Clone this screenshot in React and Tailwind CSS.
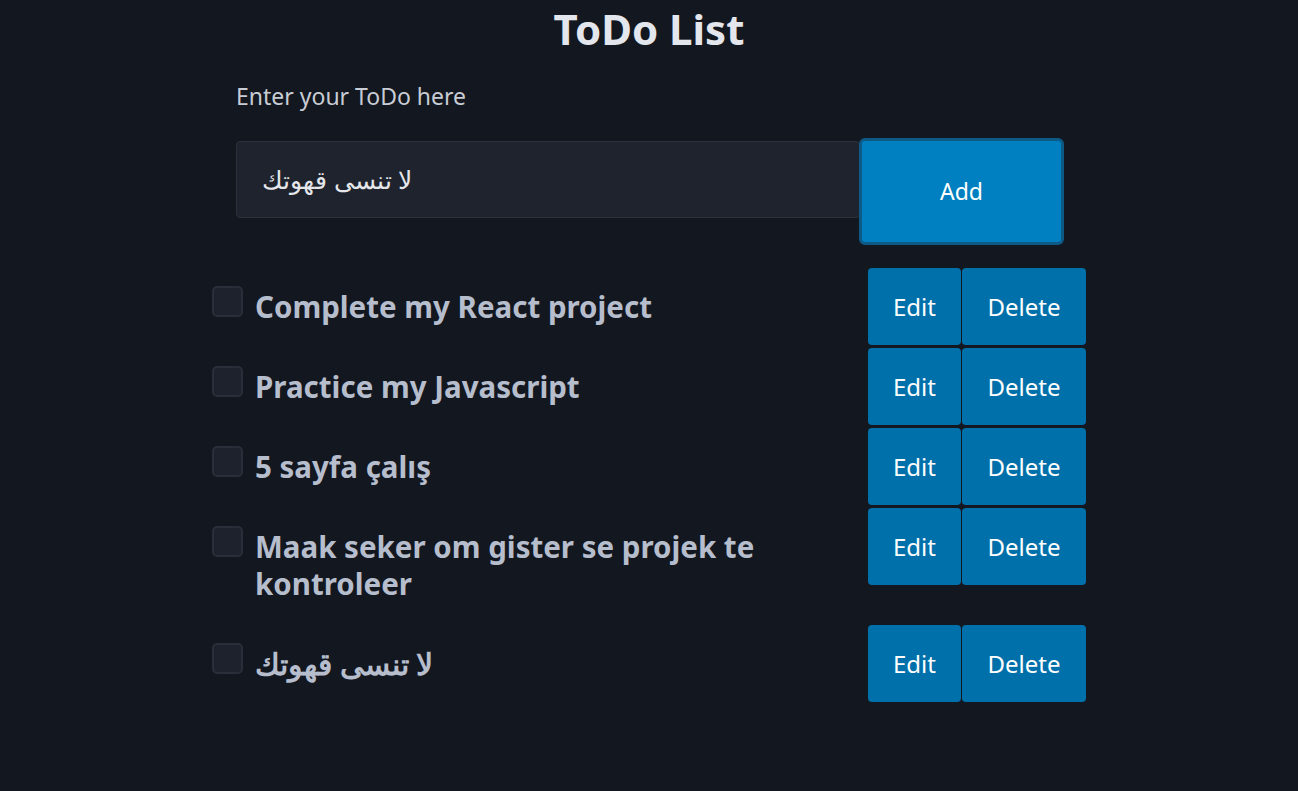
import React from "react";

const todos = [
  "Complete my React project",
  "Practice my Javascript",
  "5 sayfa çalış",
  "Maak seker om gister se projek te kontroleer",
  "لا تنسى قهوتك",
];

export default function App() {
  return (
    <div
      className="min-h-[791px] w-full bg-[#13171f] text-[#e5e7eb]"
      style={{ fontFamily: '"Noto Sans", "Open Sans", Arial, sans-serif' }}
    >
      <h1 className="m-0 pt-[2px] text-center text-[42px] font-bold leading-[54px] text-[#e3e6ec]">
        ToDo List
      </h1>
      <div className="mx-auto w-[874px] pl-[24px]">
        <div className="mt-[24px] text-[23px] leading-[32px] text-[#c8ccd4]">
          Enter your ToDo here
        </div>
        <div className="mt-[26px] flex items-start">
          <div className="mt-[3px] flex h-[77px] w-[624px] items-center rounded-[4px] border border-[#2c313c] bg-[#1f232d] pl-[25px] text-[25px] text-[#e5e7eb]">
            لا تنسى قهوتك
          </div>
          <button className="-ml-[1px] flex h-[107px] w-[205px] items-center justify-center rounded-[6px] border-[3px] border-[#0d5a86] bg-[#0080c0] text-[23px] text-white">
            Add
          </button>
        </div>
      </div>
      <div className="mx-auto mt-[23px] flex w-[874px] flex-col gap-[3px]">
        {todos.map((t, i) => (
          <div key={i} className="flex items-stretch">
            <div className="flex flex-1 items-start py-[20px]">
              <div className="mt-[-2px] h-[31px] w-[31px] shrink-0 rounded-[5px] border-2 border-[#292e3a] bg-[#1e222c]" />
              <div className="ml-[12px] w-[600px] text-[29.5px] font-bold leading-[37px] text-[#b6bdcc]">
                {t}
              </div>
            </div>
            <div className="flex h-[77px] shrink-0">
              <button className="h-[77px] w-[93px] rounded-[4px] bg-[#0070aa] text-[24px] text-white">
                Edit
              </button>
              <button className="ml-[1px] h-[77px] w-[124px] rounded-[4px] bg-[#0070aa] text-[24px] text-white">
                Delete
              </button>
            </div>
          </div>
        ))}
      </div>
    </div>
  );
}
